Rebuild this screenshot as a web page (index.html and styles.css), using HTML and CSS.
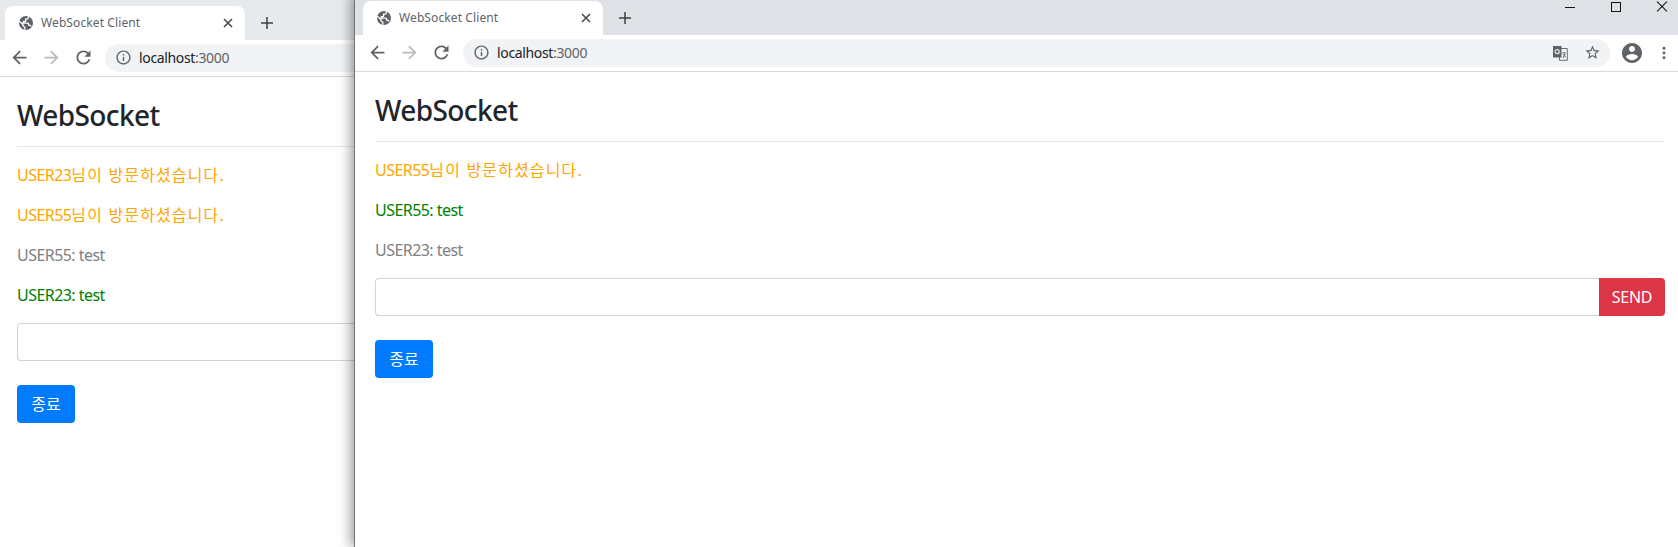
FILE: index.html
```html
<!DOCTYPE html>
<html lang="ko">
<head>
    <meta charset="UTF-8">
    <title>WebSocket Client</title>
    <link rel="stylesheet" href="styles.css">
</head>
<body>
    <svg class="sprites" width="0" height="0">
        <symbol id="i-globe" viewBox="0 0 16 16"><circle cx="8" cy="8" r="7"/><path d="M1.2 6.3L5 9.6v1.2l1.8 1.4v2.6M10.3 1.3v1.5c0 .9-.7 1.3-1.5 1.3H7.6v1.6c0 .6-.4.9-1 .9H5.3v1.5h4.4c.6 0 .9.4.9.9v1.2h1c.7 0 1.2.5 1.5 1.4" fill="none" stroke="#fff" stroke-width="1.3"/></symbol>
        <symbol id="i-close" viewBox="0 0 12 12"><path d="M2 2l8 8M10 2l-8 8" fill="none" stroke="#45484c" stroke-width="1.6"/></symbol>
        <symbol id="i-plus" viewBox="0 0 12 12"><path d="M6 0v12M0 6h12" fill="none" stroke="#3c4043" stroke-width="1.5"/></symbol>
        <symbol id="i-arrow" viewBox="0 0 24 24"><path d="M20 11H7.83l5.59-5.59L12 4l-8 8 8 8 1.41-1.41L7.83 13H20v-2z"/></symbol>
        <symbol id="i-reload" viewBox="0 0 24 24"><path d="M17.65 6.35C16.2 4.9 14.21 4 12 4c-4.42 0-7.99 3.58-7.99 8s3.57 8 7.99 8c3.73 0 6.84-2.55 7.73-6h-2.08c-.82 2.33-3.04 4-5.65 4-3.31 0-6-2.69-6-6s2.69-6 6-6c1.66 0 3.14.69 4.22 1.78L13 11h7V4l-2.35 2.35z"/></symbol>
        <symbol id="i-info" viewBox="0 0 24 24"><path d="M11 7h2v2h-2zm0 4h2v6h-2zm1-9C6.48 2 2 6.48 2 12s4.48 10 10 10 10-4.48 10-10S17.52 2 12 2zm0 18c-4.41 0-8-3.59-8-8s3.59-8 8-8 8 3.59 8 8-3.59 8-8 8z"/></symbol>
        <symbol id="i-star" viewBox="0 0 24 24"><path d="M22 9.24l-7.19-.62L12 2 9.19 8.63 2 9.24l5.46 4.73L5.82 21 12 17.27 18.18 21l-1.63-7.03L22 9.24zM12 15.4l-3.76 2.27 1-4.28-3.32-2.88 4.38-.38L12 6.1l1.71 4.04 4.38.38-3.32 2.88 1 4.28L12 15.4z"/></symbol>
        <symbol id="i-account" viewBox="0 0 24 24"><path d="M12 2C6.48 2 2 6.48 2 12s4.48 10 10 10 10-4.48 10-10S17.52 2 12 2zm0 3c1.66 0 3 1.34 3 3s-1.34 3-3 3-3-1.34-3-3 1.34-3 3-3zm0 14.2c-2.5 0-4.71-1.28-6-3.22.03-1.99 4-3.08 6-3.08 1.99 0 5.97 1.09 6 3.08-1.29 1.94-3.5 3.22-6 3.22z"/></symbol>
        <symbol id="i-translate" viewBox="0 0 16 16"><path d="M7.5 3.5h7.8v11.8H7.5z" fill="#f1f3f4" stroke="#6d7175"/><path d="M1 1h8.5v11.5H1z"/><circle cx="5.2" cy="6.7" r="2" fill="none" stroke="#e8e8e8" stroke-width="1.2"/><path d="M10.5 8h3M12 7v1M11 13l2.3-4.5M11.3 9.3l2.2 3" fill="none" stroke="#5f6368"/></symbol>
        <symbol id="i-dots" viewBox="0 0 4 16"><circle cx="2" cy="2.5" r="1.7"/><circle cx="2" cy="8" r="1.7"/><circle cx="2" cy="13.5" r="1.7"/></symbol>
    </svg>

    <!-- back window -->
    <section class="window window-back">
        <div class="window-inner">
            <div class="tab-strip">
                <div class="tab">
                    <svg class="favicon"><use href="#i-globe"/></svg>
                    <span class="tab-title">WebSocket Client</span>
                    <svg class="tab-close"><use href="#i-close"/></svg>
                </div>
                <svg class="new-tab"><use href="#i-plus"/></svg>
            </div>
            <div class="toolbar">
                <svg class="nav-icon"><use href="#i-arrow"/></svg>
                <svg class="nav-icon forward"><use href="#i-arrow"/></svg>
                <svg class="nav-icon"><use href="#i-reload"/></svg>
                <div class="omnibox">
                    <svg class="info-icon"><use href="#i-info"/></svg>
                    <span class="host">localhost</span><span class="port">:3000</span>
                </div>
            </div>
            <main class="page">
                <h3 class="title">WebSocket</h3>
                <hr class="rule">
                <p class="msg msg-join">USER23<span class="ko">님이 방문하셨습니다.</span></p>
                <p class="msg msg-join">USER55<span class="ko">님이 방문하셨습니다.</span></p>
                <p class="msg msg-other">USER55: test</p>
                <p class="msg msg-mine">USER23: test</p>
                <div class="input-group">
                    <input class="msg-input" type="text">
                </div>
                <button class="btn btn-quit">종료</button>
            </main>
        </div>
    </section>

    <!-- front window -->
    <section class="window window-front">
        <div class="window-inner">
            <div class="tab-strip">
                <div class="tab">
                    <svg class="favicon"><use href="#i-globe"/></svg>
                    <span class="tab-title">WebSocket Client</span>
                    <svg class="tab-close"><use href="#i-close"/></svg>
                </div>
                <svg class="new-tab"><use href="#i-plus"/></svg>
                <div class="win-controls">
                    <span class="win-min"></span>
                    <span class="win-max"></span>
                    <span class="win-close"></span>
                </div>
            </div>
            <div class="toolbar">
                <svg class="nav-icon"><use href="#i-arrow"/></svg>
                <svg class="nav-icon forward"><use href="#i-arrow"/></svg>
                <svg class="nav-icon"><use href="#i-reload"/></svg>
                <div class="omnibox">
                    <svg class="info-icon"><use href="#i-info"/></svg>
                    <span class="host">localhost</span><span class="port">:3000</span>
                    <svg class="omni-icon translate"><use href="#i-translate"/></svg>
                    <svg class="omni-icon star"><use href="#i-star"/></svg>
                </div>
                <svg class="account"><use href="#i-account"/></svg>
                <svg class="dots"><use href="#i-dots"/></svg>
            </div>
            <main class="page">
                <h3 class="title">WebSocket</h3>
                <hr class="rule">
                <p class="msg msg-join">USER55<span class="ko">님이 방문하셨습니다.</span></p>
                <p class="msg msg-mine">USER55: test</p>
                <p class="msg msg-other">USER23: test</p>
                <div class="input-group">
                    <input class="msg-input" type="text">
                    <button class="btn btn-send">SEND</button>
                </div>
                <button class="btn btn-quit">종료</button>
            </main>
        </div>
    </section>
</body>
</html>
```

FILE: styles.css
```css
* {
    box-sizing: border-box;
}
html, body {
    height: 100%;
}
body {
    margin: 0;
    overflow: hidden;
    position: relative;
    background: #fff;
    color: #212529;
    font-family: "Noto Sans", "Noto Sans CJK KR", sans-serif;
    font-size: 16px;
    line-height: 24px;
}
.sprites {
    position: absolute;
}

/* windows sit on a desktop, so these two are placed by hand */
.window {
    position: absolute;
    background: #fff;
    overflow: hidden;
}
.window-back {
    left: -3px;
    top: 0;
    width: 358px;
    height: 547px;
}
.window-front {
    left: 354px;
    top: -5px;
    width: 1324px;
    height: 552px;
    border-left: 1px solid #6f7173;
    overflow: visible;
    box-shadow: -3px 0 12px rgba(0, 0, 0, 0.4);
}
.window-inner {
    width: 1323px;
    height: 100%;
    overflow: hidden;
}

/* tabs */
.tab-strip {
    display: flex;
    align-items: flex-end;
    height: 40px;
    padding-left: 8px;
    background: #e7eaed;
}
.window-front .tab-strip {
    background: #dee1e6;
}
.tab {
    display: flex;
    align-items: center;
    width: 240px;
    height: 34px;
    padding: 0 11px 0 13px;
    background: #fff;
    border-radius: 8px 8px 0 0;
}
.favicon {
    width: 16px;
    height: 16px;
    fill: #5f6368;
    flex: none;
}
.tab-title {
    margin-left: 7px;
    flex: 1;
    font-size: 12px;
    letter-spacing: 0.1px;
    color: #5f6368;
    white-space: nowrap;
}
.tab-close {
    width: 12px;
    height: 12px;
    flex: none;
}
.new-tab {
    width: 12px;
    height: 12px;
    margin: 0 0 11px 16px;
    flex: none;
}
.win-controls {
    display: flex;
    margin-left: auto;
    align-self: flex-start;
    gap: 36px;
    padding: 7px 11px 0 0;
}
.win-controls span {
    position: relative;
    display: block;
    width: 10px;
    height: 10px;
}
.win-min::after {
    content: "";
    position: absolute;
    left: 0;
    right: 0;
    top: 5px;
    height: 1px;
    background: #111;
}
.win-max {
    border: 1px solid #111;
}
.win-close::before,
.win-close::after {
    content: "";
    position: absolute;
    left: -2px;
    right: -2px;
    top: 4px;
    height: 1px;
    background: #111;
    transform: rotate(45deg);
}
.win-close::after {
    transform: rotate(-45deg);
}

/* toolbar */
.toolbar {
    display: flex;
    align-items: center;
    height: 37px;
    padding: 0 6px 1px 11.5px;
    background: #fff;
    border-bottom: 1px solid #d9d9da;
}
.nav-icon {
    width: 21px;
    height: 21px;
    margin-right: 11px;
    fill: #5f6368;
    flex: none;
}
.nav-icon.forward {
    fill: #b9bbbe;
    transform: scaleX(-1);
}
.omnibox {
    display: flex;
    align-items: center;
    flex: 1;
    height: 28px;
    margin-left: 0.5px;
    padding: 0 9.5px 0 9.5px;
    background: #f1f3f4;
    border-radius: 14px;
    font-size: 14px;
    letter-spacing: -0.35px;
}
.info-icon {
    width: 17px;
    height: 17px;
    margin-right: 7.5px;
    fill: #5f6368;
}
.host {
    color: #202124;
}
.port {
    color: #5f6368;
}
.omni-icon {
    width: 16px;
    height: 16px;
    fill: #5f6368;
}
.translate {
    margin-left: auto;
}
.star {
    width: 17px;
    height: 17px;
    margin-left: 15.5px;
}
.account {
    width: 24px;
    height: 24px;
    margin-left: 10px;
    fill: #5f6368;
}
.dots {
    width: 4px;
    height: 14px;
    margin: 0 6px 0 18px;
    fill: #5f6368;
}

/* page */
.page {
    padding: 22px 13px 0 20px;
}
.title {
    margin: 0;
    font-size: 28px;
    font-weight: 500;
    line-height: 33.6px;
    letter-spacing: -0.6px;
}
.rule {
    margin: 13.4px 0 16px;
    border: 0;
    border-top: 1px solid rgba(0, 0, 0, 0.1);
}
.msg {
    margin: 0 0 16px;
    letter-spacing: -0.55px;
}
.ko {
    letter-spacing: 1.15px;
}
.msg-join {
    color: orange;
}
.msg-mine {
    color: green;
}
.msg-other {
    color: gray;
}
.input-group {
    display: flex;
    height: 38px;
}
.msg-input {
    flex: 1;
    min-width: 0;
    border: 1px solid #ced4da;
    border-right: 0;
    border-radius: 4px 0 0 4px;
    background: #fff;
}
.btn {
    height: 38px;
    padding: 6px 12px;
    border: 1px solid transparent;
    font-family: inherit;
    font-size: 16px;
    line-height: 24px;
    color: #fff;
}
.btn-send {
    width: 66px;
    padding: 6px 0;
    background: #dc3545;
    border-radius: 0 4px 4px 0;
    letter-spacing: -0.3px;
}
.btn-quit {
    display: block;
    width: 58px;
    margin-top: 24px;
    padding: 6px 0;
    background: #007bff;
    border-radius: 4px;
}
```
